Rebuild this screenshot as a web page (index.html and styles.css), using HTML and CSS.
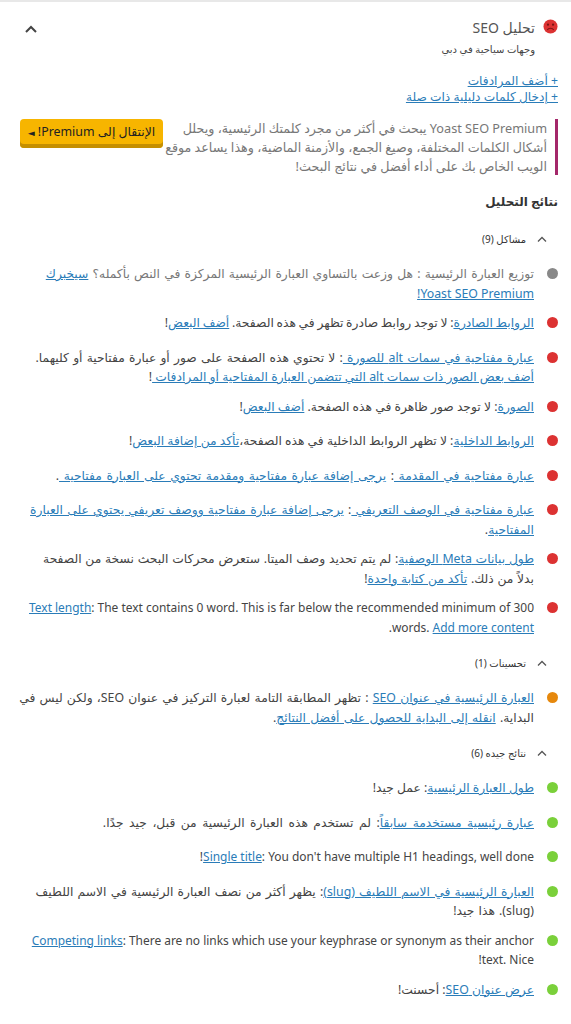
FILE: index.html
```html
<!DOCTYPE html>
<html lang="ar" dir="rtl">
<head>
<meta charset="utf-8">
<title>تحليل SEO</title>
<link rel="stylesheet" href="styles.css">
</head>
<body>
<div class="topband"></div>
<main class="panel">
  <header class="head">
    <svg class="face" viewBox="0 0 16 16" aria-hidden="true"><circle cx="8" cy="8" r="7.5" fill="#dc3232"/><circle cx="5.3" cy="6" r="1.2" fill="#7a1414"/><circle cx="10.7" cy="6" r="1.2" fill="#7a1414"/><path d="M4.6 11.6c1.6-2.3 5.2-2.3 6.8 0" fill="none" stroke="#7a1414" stroke-width="1.2"/></svg>
    <div class="head-text">
      <h2 class="title">تحليل SEO</h2>
      <div class="subtitle">وجهات سياحية في دبي</div>
    </div>
    <svg class="chev-big" viewBox="0 0 14 10" aria-hidden="true"><path d="M2 8l5-5 5 5" fill="none" stroke="#444" stroke-width="2"/></svg>
  </header>

  <div class="addlinks">
    <a href="#">+ أضف المرادفات</a><br>
    <a href="#">+ إدخال كلمات دليلية ذات صلة</a>
  </div>

  <section class="upsell">
    <a class="btn" href="#">الإنتقال إلى Premium! <span class="tri">◄</span></a>
    <p class="upsell-text">Yoast SEO Premium يبحث في أكثر من مجرد كلمتك الرئيسية، ويحلل<br>أشكال الكلمات المختلفة، وصيغ الجمع، والأزمنة الماضية، وهذا يساعد موقع<br>الويب الخاص بك على أداء أفضل في نتائج البحث!</p>
  </section>

  <h3 class="results-title">نتائج التحليل</h3>

  <div class="group-head first">
    <svg class="chev" viewBox="0 0 12 8" aria-hidden="true"><path d="M2 6.5l4-4 4 4" fill="none" stroke="#555" stroke-width="1.3"/></svg>
    <span>مشاكل (9)</span>
  </div>
  <ul class="list">
    <li class="item muted ws1"><i class="dot gray"></i><div>توزيع العبارة الرئيسية : هل وزعت بالتساوي العبارة الرئيسية المركزة في النص بأكمله؟ <a href="#">سيخبرك</a><br><a href="#" class="ws0">Yoast SEO Premium!</a></div></li>
    <li class="item tight"><i class="dot red"></i><div><a href="#">الروابط الصادرة</a>: لا توجد روابط صادرة تظهر في هذه الصفحة. <a href="#">أضف البعض</a>!</div></li>
    <li class="item ws1"><i class="dot red"></i><div><a href="#">عبارة مفتاحية في سمات alt للصورة </a>: لا تحتوي هذه الصفحة على صور أو عبارة مفتاحية أو كليهما.<br><span class="ws0"><a href="#">أضف بعض الصور ذات سمات alt التي تتضمن العبارة المفتاحية أو المرادفات </a>!</span></div></li>
    <li class="item"><i class="dot red"></i><div><a href="#">الصورة</a>: لا توجد صور ظاهرة في هذه الصفحة. <a href="#">أضف البعض</a>!</div></li>
    <li class="item"><i class="dot red"></i><div><a href="#">الروابط الداخلية</a>: لا تظهر الروابط الداخلية في هذه الصفحة،<a href="#">تأكد من إضافة البعض</a>!</div></li>
    <li class="item ws15"><i class="dot red"></i><div><a href="#">عبارة مفتاحية في المقدمة </a>: <a href="#">يرجى إضافة عبارة مفتاحية ومقدمة تحتوي على العبارة مفتاحية </a>.</div></li>
    <li class="item ws1"><i class="dot red"></i><div><a href="#">عبارة مفتاحية في الوصف التعريفي </a>: <a href="#">يرجى إضافة عبارة مفتاحية ووصف تعريفي يحتوي على العبارة</a><br><a href="#">المفتاحية</a>.</div></li>
    <li class="item ws05"><i class="dot red"></i><div><a href="#">طول بيانات Meta الوصفية</a>: لم يتم تحديد وصف الميتا. ستعرض محركات البحث نسخة من الصفحة<br>بدلاً من ذلك. <a href="#">تأكد من كتابة واحدة</a>!</div></li>
    <li class="item latin-row"><i class="dot red"></i><div><a href="#">Text length</a>: The text contains 0 word. This is far below the recommended minimum of 300<br>words. <a href="#">Add more content</a>.</div></li>
  </ul>

  <div class="group-head">
    <svg class="chev" viewBox="0 0 12 8" aria-hidden="true"><path d="M2 6.5l4-4 4 4" fill="none" stroke="#555" stroke-width="1.3"/></svg>
    <span>تحسينات (1)</span>
  </div>
  <ul class="list">
    <li class="item ws1"><i class="dot orange"></i><div><a href="#">العبارة الرئيسية في عنوان SEO</a> : تظهر المطابقة التامة لعبارة التركيز في عنوان SEO، ولكن ليس في<br>البداية. <a href="#">انقله إلى البداية للحصول على أفضل النتائج</a>.</div></li>
  </ul>

  <div class="group-head">
    <svg class="chev" viewBox="0 0 12 8" aria-hidden="true"><path d="M2 6.5l4-4 4 4" fill="none" stroke="#555" stroke-width="1.3"/></svg>
    <span>نتائج جيده (6)</span>
  </div>
  <ul class="list">
    <li class="item"><i class="dot green"></i><div><a href="#">طول العبارة الرئيسية</a>: عمل جيد!</div></li>
    <li class="item ws2"><i class="dot green"></i><div><a href="#">عبارة رئيسية مستخدمة سابقاً</a>: لم تستخدم هذه العبارة الرئيسية من قبل، جيد جدًا.</div></li>
    <li class="item latin-row"><i class="dot green"></i><div><a href="#">Single title</a>: You don't have multiple H1 headings, well done!</div></li>
    <li class="item ws1"><i class="dot green"></i><div><a href="#">العبارة الرئيسية في الاسم اللطيف (slug)</a>: يظهر أكثر من نصف العبارة الرئيسية في الاسم اللطيف<br>(slug). هذا جيد!</div></li>
    <li class="item latin-row"><i class="dot green"></i><div><a href="#">Competing links</a>: There are no links which use your keyphrase or synonym as their anchor<br>text. Nice!</div></li>
    <li class="item"><i class="dot green"></i><div><a href="#">عرض عنوان SEO</a>: أحسنت!</div></li>
  </ul>
</main>
</body>
</html>
```
FILE: styles.css
```css
* { box-sizing: border-box; }
html, body { margin: 0; padding: 0; background: #fff; }
body {
  font-family: "Noto Sans", "DejaVu Sans", sans-serif;
  font-size: 12.3px;
  color: #444;
  height: 1024px;
  overflow: hidden;
}
a { color: #2a7cb8; text-decoration: underline; }
.topband { height: 2px; background: #e8e8e8; }
.panel { padding: 0 13px 0 0; }

.head { display: flex; align-items: flex-start; padding-top: 16px; }
.face { width: 15px; height: 15px; margin-top: 1px; flex: none; }
.head-text { margin-right: 8px; flex: 1; }
.title { margin: 0; font-size: 14px; font-weight: 400; line-height: 20px; color: #555; }
.subtitle { font-size: 10px; line-height: 18px; color: #444; margin-top: 2px; }
.chev-big { width: 14px; height: 10px; margin: 6px 0 0 24px; flex: none; }

.addlinks { margin-top: 15px; font-size: 12.2px; line-height: 16px; }

.upsell { margin: 14px 0 0 20px; padding-right: 8px; border-right: 3px solid #a4286a; height: 56px; }
.btn {
  float: left;
  width: 143px;
  height: 29px;
  background: #f7b500;
  border-radius: 4px;
  box-shadow: inset 0 -4px 0 #c58f00;
  color: #222;
  text-decoration: none;
  font-size: 12.4px;
  line-height: 25px;
  text-align: center;
}
.tri { font-size: 9px; }
.upsell-text { margin: 0; font-size: 12.7px; line-height: 19px; color: #777; white-space: nowrap; }

.results-title { margin: 17px 0 0; font-size: 12px; font-weight: 700; line-height: 20px; color: #333; }

.group-head { display: flex; align-items: center; height: 20px; margin-top: 16px; padding-right: 10px; font-size: 10px; color: #333; }
.group-head.first { margin-top: 17px; }
.chev { width: 12px; height: 8px; margin-left: 10px; flex: none; }

.list { list-style: none; margin: 15px 0 0; padding: 0; }
.item { display: flex; align-items: flex-start; min-height: 24.5px; margin-bottom: 10px; line-height: 19.5px; }
.item.muted { color: #777; }
.tight { word-spacing: -0.5px; }
.ws05 { word-spacing: 0.5px; }
.ws1 { word-spacing: 1px; }
.ws15 { word-spacing: 1.4px; }
.ws2 { word-spacing: 2.3px; }
.ws0 { word-spacing: 0; }
.latin-row { font-size: 11.95px; }
.dot { width: 11px; height: 11px; border-radius: 50%; margin: 4px 0 0 13px; flex: none; }
.gray { background: #888; }
.red { background: #dc3232; }
.orange { background: #e6880c; }
.green { background: #7ad03a; }
```
